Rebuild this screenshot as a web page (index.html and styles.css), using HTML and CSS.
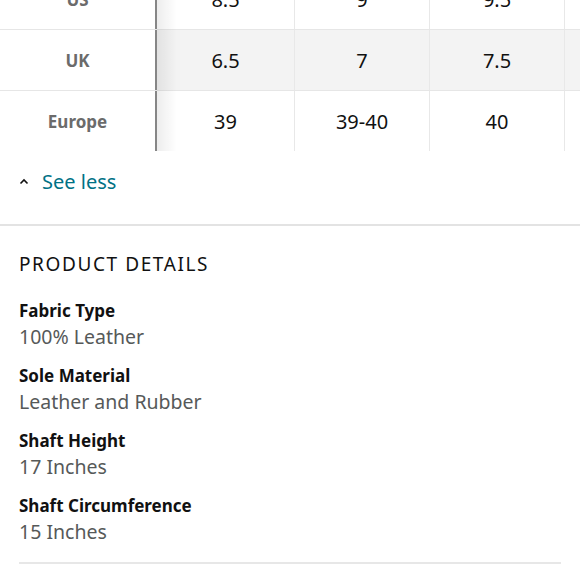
FILE: index.html
```html
<!DOCTYPE html>
<html>
<head>
<meta charset="utf-8">
<link rel="stylesheet" href="styles.css">
</head>
<body>
<div class="size-table">
  <div class="shadow"></div>
  <div class="row">
    <div class="label">US</div>
    <div class="cell c1">8.5</div>
    <div class="cell c2">9</div>
    <div class="cell c3">9.5</div>
    <div class="cell c4"></div>
  </div>
  <div class="row shaded">
    <div class="label">UK</div>
    <div class="cell c1">6.5</div>
    <div class="cell c2">7</div>
    <div class="cell c3">7.5</div>
    <div class="cell c4"></div>
  </div>
  <div class="row last">
    <div class="label">Europe</div>
    <div class="cell c1">39</div>
    <div class="cell c2">39-40</div>
    <div class="cell c3">40</div>
    <div class="cell c4"></div>
  </div>
</div>
<div class="see-less">
  <svg class="caret" width="10" height="7" viewBox="0 0 10 7"><path d="M1.5 5.5 L5 2 L8.5 5.5" fill="none" stroke="#111" stroke-width="1.6"/></svg>
  <span>See less</span>
</div>
<div class="details">
  <h2 class="title">PRODUCT DETAILS</h2>
  <div class="item"><div class="key">Fabric Type</div><div class="val">100% Leather</div></div>
  <div class="item"><div class="key">Sole Material</div><div class="val">Leather and Rubber</div></div>
  <div class="item"><div class="key">Shaft Height</div><div class="val">17 Inches</div></div>
  <div class="item"><div class="key">Shaft Circumference</div><div class="val">15 Inches</div></div>
  <div class="rule"></div>
</div>
</body>
</html>
```
FILE: styles.css
```css
html, body { margin: 0; padding: 0; background: #fff; }
body { font-family: "Noto Sans", "Open Sans", sans-serif; color: #111; width: 580px; overflow: hidden; }

.size-table { position: relative; margin-top: -31px; }
.shadow { position: absolute; left: 157px; top: 31px; bottom: 0; width: 20px;
  background: linear-gradient(to right, rgba(0,0,0,0.07), rgba(0,0,0,0)); pointer-events: none; }
.row { display: flex; height: 60px; border-bottom: 1px solid #e6e6e6; }
.row.last { border-bottom: none; }
.label { width: 155px; flex: none; border-right: 2px solid #868686; display: flex; align-items: center; justify-content: center;
  font-weight: 700; font-size: 17px; color: #6b6b6b; }
.cell { flex: none; display: flex; align-items: center; justify-content: center; font-size: 20px; color: #111;
  border-right: 1px solid #e8e8e8; }
.c1 { width: 137px; }
.c2 { width: 134px; }
.c3 { width: 134px; }
.c4 { flex: 1; border-right: none; }
.shaded .cell { background: #f3f3f3; }

.see-less { display: flex; align-items: center; padding-left: 19px; padding-bottom: 13px; border-bottom: 2px solid #e3e3e3; box-sizing: border-box; height: 75px; }
.caret { margin-right: 13px; }
.see-less span { color: #007185; font-size: 20px; }

.details { padding: 0 19px; }
.title { margin: 24px 0 0; font-size: 19px; font-weight: 400; letter-spacing: 1.6px; line-height: 28px; color: #111; }
.item { margin-top: 21px; }
.item + .item { margin-top: 13px; }
.key { font-weight: 700; font-size: 17px; line-height: 24px; color: #111; }
.val { font-size: 19.5px; line-height: 28px; color: #565959; }
.rule { margin-top: 16px; height: 2px; background: #e7e7e7; }
```
